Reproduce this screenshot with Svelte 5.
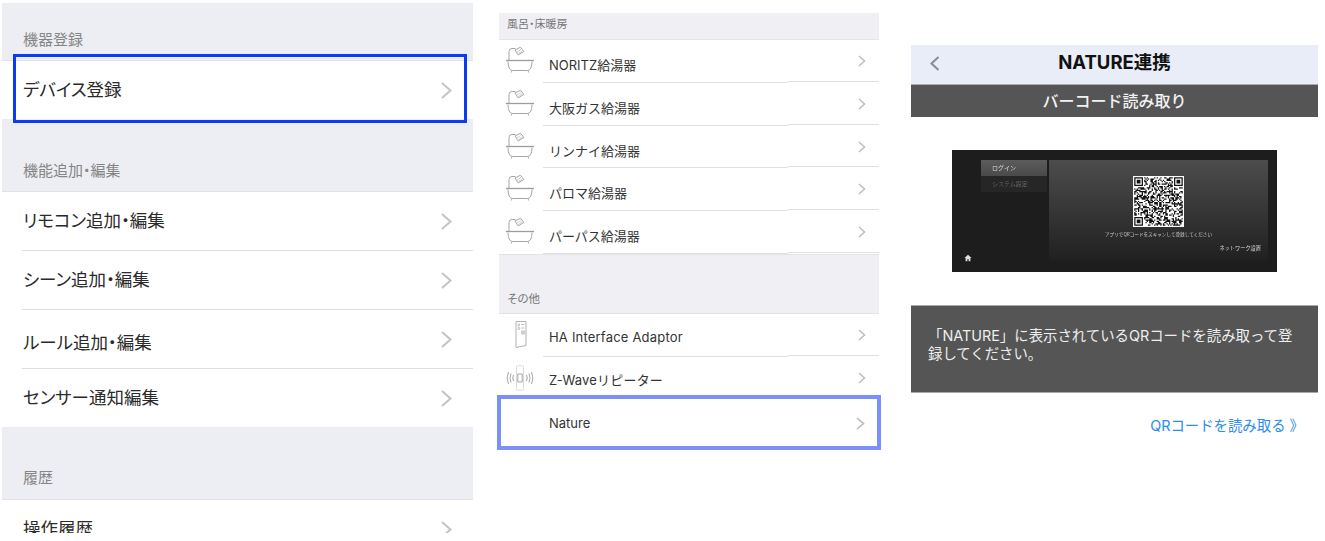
<script lang="ts">
	const settingSections = [
		{ title: '機器登録', cls: 'first', rows: [{ label: 'デバイス登録', hl: true }] },
		{
			title: '機能追加・編集',
			cls: '',
			rows: [
				{ label: 'リモコン追加・編集' },
				{ label: 'シーン追加・編集' },
				{ label: 'ルール追加・編集', low: true },
				{ label: 'センサー通知編集' }
			]
		},
		{ title: '履歴', cls: 'third', rows: [{ label: '操作履歴' }] }
	];

	const heaters = ['NORITZ給湯器', '大阪ガス給湯器', 'リンナイ給湯器', 'パロマ給湯器', 'パーパス給湯器'];

	// fake but stable QR modules
	const size = 39;
	function finder(x: number, y: number) {
		return `M${x} ${y}h7v7h-7zM${x + 1} ${y + 1}v5h5v-5zM${x + 2} ${y + 2}h3v3h-3z`;
	}
	let seed = 20231;
	let qrPath = finder(0, 0) + finder(size - 7, 0) + finder(0, size - 7);
	for (let y = 0; y < size; y++) {
		for (let x = 0; x < size; x++) {
			const inFinder = (x < 8 && y < 8) || (x >= size - 8 && y < 8) || (x < 8 && y >= size - 8);
			seed = (seed * 1103515245 + 12345) & 0x7fffffff;
			if (!inFinder && (seed >> 16) & 1) qrPath += `M${x} ${y}h1v1h-1z`;
		}
	}
	qrPath += `M${size - 9} ${size - 9}h9v9h-9z`;
</script>

<div class="page">
	<section class="panel settings">
		{#each settingSections as section}
			<div class="s-head {section.cls}">{section.title}</div>
			{#each section.rows as row, i}
				<div class="s-row" class:hl={row.hl} class:last={i === section.rows.length - 1}>
					<span class="s-label" class:low={row.low}>{row.label}</span>
					<svg class="chev-lg" viewBox="0 0 11 17" aria-hidden="true">
						<path d="M1 1l8.5 7.5L1 16" />
					</svg>
				</div>
			{/each}
		{/each}
	</section>

	<section class="panel devices">
		<div class="d-head top">風呂・床暖房</div>
		{#each heaters as name}
			<div class="d-row">
				<svg class="bath" viewBox="0 0 30 26" aria-hidden="true">
					<path d="M4 13V4.5Q4 1.5 7 1.5H10.5" />
					<path d="M10 3l5.5-2.8 3.4 4.3-5.7 3.4z" />
					<path d="M12 5l4-2.6M13.5 6.4l4-2.6" stroke-width="0.5" />
					<path d="M1 13.5H29" stroke-width="1.3" />
					<path d="M3 14.5Q3 23 7.5 23.5H22.5Q27 23 27 14.5" />
					<path d="M7 23.5l-.7 2M23 23.5l.7 2" />
				</svg>
				<span class="d-label">{name}</span>
				<svg class="chev-sm" viewBox="0 0 8 12" aria-hidden="true"><path d="M1 1l5.5 5L1 11" /></svg>
				<div class="sep"><i></i><i></i></div>
			</div>
		{/each}

		<div class="d-head tall">その他</div>
		<div class="d-row">
			<svg class="adaptor" viewBox="0 0 12 28" aria-hidden="true">
				<path d="M1 1.5H11V25.5L1 27.5z" />
				<path d="M3 4h1.5v2H3zM3 7.5h1.5v2H3z" stroke-width="0.6" />
				<path d="M6 4.5h3.5M6 8h3.5" stroke-width="0.7" />
				<path d="M6 10.5h4v4H6z" fill="#cfcfcf" stroke="none" />
			</svg>
			<span class="d-label hi">HA Interface Adaptor</span>
			<svg class="chev-sm" viewBox="0 0 8 12" aria-hidden="true"><path d="M1 1l5.5 5L1 11" /></svg>
			<div class="sep"><i></i><i></i></div>
		</div>
		<div class="d-row">
			<svg class="repeater" viewBox="0 0 28 26" aria-hidden="true">
				<path d="M10.5 1.5Q10.5.8 11.2.8H16.8Q17.5.8 17.5 1.5V24Q17.5 25.2 16.3 25.2H11.7Q10.5 25.2 10.5 24z" stroke="#d8d8d8" />
				<path d="M11.8 9H16.2V17H11.8z" />
				<path d="M7.5 10Q6 13 7.5 16M5 8.5Q3 13 5 17.5M2.5 7Q-.3 13 2.5 19" />
				<path d="M20.5 10Q22 13 20.5 16M23 8.5Q25 13 23 17.5M25.5 7Q28.3 13 25.5 19" />
			</svg>
			<span class="d-label hi">Z-Waveリピーター</span>
			<svg class="chev-sm" viewBox="0 0 8 12" aria-hidden="true"><path d="M1 1l5.5 5L1 11" /></svg>
		</div>
		<div class="d-row nature">
			<span class="d-label">Nature</span>
			<svg class="chev-md" viewBox="0 0 9 13" aria-hidden="true"><path d="M1 1l6.5 5.5L1 12" /></svg>
		</div>
	</section>

	<section class="panel nature-link">
		<header class="nav">
			<svg class="back" viewBox="0 0 10 15" aria-hidden="true"><path d="M8.5 1L1.5 7.5l7 6.5" /></svg>
			<h1>NATURE連携</h1>
		</header>
		<h2 class="sub">バーコード読み取り</h2>

		<div class="screen">
			<div class="screen-side">
				<div class="menu active">ログイン</div>
				<div class="menu">システム設定</div>
				<svg class="home" viewBox="0 0 10 10" aria-hidden="true">
					<path d="M5 .8L.5 5H2v4h2.2V6.5h1.6V9H8V5h1.5z" />
				</svg>
			</div>
			<div class="screen-main">
				<svg class="qr" viewBox="-1 -1 {size + 2} {size + 2}" aria-hidden="true">
					<rect x="-1" y="-1" width={size + 2} height={size + 2} fill="#fff" />
					<path d={qrPath} fill="#111" fill-rule="evenodd" />
				</svg>
				<p class="caption">アプリでQRコードをスキャンして登録してください</p>
				<p class="network">ネットワーク設置</p>
			</div>
		</div>

		<div class="info">「NATURE」に表示されているQRコードを読み取って登録してください。</div>
		<p class="link">QRコードを読み取る 》</p>
	</section>
</div>

<style>
	:global(body) {
		margin: 0;
		background: #fff;
		overflow: hidden;
	}

	.page {
		display: flex;
		align-items: flex-start;
		width: 1325px;
		height: 541px;
		overflow: hidden;
		font-family: Inter, "Noto Sans CJK JP", sans-serif;
		color: #2a2a2a;
	}

	.panel {
		flex: none;
	}

	/* left: settings list */
	.settings {
		width: 471px;
		height: 530px;
		margin: 3px 0 0 2px;
		overflow: hidden;
		background: #fff;
	}

	.s-head {
		box-sizing: border-box;
		height: 73px;
		padding-top: 41px;
		padding-left: 21px;
		background: #edeef3;
		border-bottom: 1px solid #e2e2e6;
		color: #858585;
		font-size: 15px;
		font-feature-settings: "palt";
		line-height: 21px;
	}

	.s-head.first {
		height: 58px;
		padding-top: 26px;
	}

	.s-head.third {
		padding-top: 40px;
	}

	.s-row {
		position: relative;
		display: flex;
		align-items: center;
		box-sizing: border-box;
		height: 59px;
		margin-left: 20px;
		padding: 0 21px 0 1px;
		border-bottom: 1px solid #dedee0;
		background: #fff;
	}

	.s-row.last {
		height: 58px;
		margin-left: 0;
		padding-left: 21px;
		border-bottom: none;
	}

	.s-row.hl::after {
		content: '';
		position: absolute;
		left: 11px;
		right: 6px;
		top: -7px;
		bottom: -4px;
		border: 3px solid #0b3cf3;
	}

	.s-label {
		font-size: 17.5px;
		font-feature-settings: "palt";
		line-height: 24px;
	}

	.s-label.low {
		padding-top: 8px;
	}

	.chev-lg {
		width: 11px;
		height: 17px;
		margin-left: auto;
		fill: none;
		stroke: #c3c3c6;
		stroke-width: 2;
	}

	/* middle: device list */
	.devices {
		width: 380px;
		margin: 13px 0 0 26px;
		background: #fff;
	}

	.d-head {
		box-sizing: border-box;
		padding-left: 8px;
		background: #efeff4;
		border-bottom: 1px solid #e4e4e7;
		color: #777;
		font-size: 11px;
		font-feature-settings: "palt";
	}

	.d-head.top {
		height: 27px;
		line-height: 22px;
	}

	.d-head.tall {
		height: 60px;
		padding-top: 35px;
		line-height: 18px;
		font-size: 11.5px;
		border-top: 1px solid #e4e4e7;
	}

	.d-row {
		position: relative;
		display: flex;
		align-items: flex-start;
		box-sizing: border-box;
		height: 42.75px;
		padding-right: 13px;
	}

	.d-label {
		position: absolute;
		left: 50px;
		top: 16px;
		font-size: 13px;
		line-height: 18px;
		color: #333;
	}

	.d-label.hi {
		top: 14.5px;
		letter-spacing: 0.2px;
	}

	.sep {
		position: absolute;
		left: 44px;
		right: 0;
		bottom: 0;
		display: flex;
		align-items: flex-end;
	}

	.sep i {
		display: block;
		height: 1px;
		background: #e0e0e2;
	}

	.sep i:first-child {
		width: 245px;
	}

	.sep i:last-child {
		flex: 1;
		margin-bottom: 1px;
	}

	.bath {
		width: 30px;
		height: 26px;
		margin: 7px 0 0 6px;
		fill: none;
		stroke: #9c9c9c;
		stroke-width: 0.9;
	}

	.adaptor {
		width: 12px;
		height: 28px;
		margin: 6px 0 0 16px;
		fill: none;
		stroke: #a8a8a8;
		stroke-width: 0.9;
	}

	.repeater {
		width: 28px;
		height: 26px;
		margin: 8px 0 0 7px;
		fill: none;
		stroke: #9c9c9c;
		stroke-width: 0.9;
	}

	.chev-sm {
		width: 8px;
		height: 12px;
		margin: 15px 0 0 auto;
		fill: none;
		stroke: #bdbdc0;
		stroke-width: 1.5;
	}

	.d-row.nature {
		height: 53px;
		padding-right: 14px;
		margin-top: -2px;
	}

	.d-row.nature .d-label {
		top: 17px;
	}

	.d-row.nature::after {
		content: '';
		position: absolute;
		left: -2px;
		right: -2px;
		top: -2px;
		bottom: 0;
		border: 4px solid #7c90fb;
	}

	.chev-md {
		width: 9px;
		height: 13px;
		margin: 20px 0 0 auto;
		fill: none;
		stroke: #b8b8bb;
		stroke-width: 1.6;
	}

	/* right: nature link */
	.nature-link {
		width: 407px;
		margin: 45px 0 0 32px;
	}

	.nav {
		position: relative;
		display: flex;
		align-items: center;
		justify-content: center;
		height: 40px;
		background: #e8edf8;
		border-bottom: 1px solid #a9abb0;
		box-sizing: border-box;
	}

	.nav h1 {
		margin: 0 0 6px;
		font-size: 18.5px;
		font-weight: 700;
		line-height: 24px;
		color: #111;
	}

	.back {
		position: absolute;
		left: 19px;
		top: 11px;
		width: 10px;
		height: 15px;
		fill: none;
		stroke: #8b8b90;
		stroke-width: 2;
	}

	.sub {
		box-sizing: border-box;
		height: 32px;
		margin: 0;
		background: #555;
		color: #f2f2f2;
		font-size: 16px;
		font-weight: 500;
		line-height: 33px;
		text-align: center;
	}

	.screen {
		display: flex;
		box-sizing: border-box;
		width: 325px;
		height: 122px;
		margin: 33px 0 0 41px;
		padding: 10px 9px 11px 29px;
		gap: 2px;
		background: #1d1d1d;
		filter: blur(0.5px);
		font-family: "Noto Sans CJK JP", sans-serif;
	}

	.screen-side {
		position: relative;
		width: 66px;
		flex: none;
	}

	.menu {
		box-sizing: border-box;
		height: 16px;
		padding-left: 11px;
		background: #262626;
		color: #666;
		font-size: 6px;
		line-height: 15px;
	}

	.menu.active {
		background: linear-gradient(#5c5c5c, #4a4a4a);
		color: #ddd;
	}

	.home {
		position: absolute;
		left: -17px;
		bottom: -1px;
		width: 8px;
		height: 8px;
		fill: #ddd;
	}

	.screen-main {
		position: relative;
		flex: 1;
		display: flex;
		flex-direction: column;
		align-items: center;
		padding-top: 16px;
		background: linear-gradient(#4c4c4c, #202020);
	}

	.qr {
		width: 51px;
		height: 51px;
		flex: none;
	}

	.caption {
		margin: 4px 0 0;
		color: #ccc;
		font-size: 4.6px;
		line-height: 6px;
	}

	.network {
		position: absolute;
		right: 7px;
		bottom: 10px;
		margin: 0;
		color: #ddd;
		font-size: 5.2px;
		line-height: 7px;
	}

	.info {
		box-sizing: border-box;
		height: 88px;
		margin-top: 33px;
		padding: 21px 22px 0 17px;
		background: #555;
		border: 1px solid #a8a8a8;
		border-width: 1px 0;
		color: #eee;
		font-size: 14.4px;
		line-height: 18px;
	}

	.link {
		margin: 23px 14px 0 0;
		color: #2d8cf0;
		font-size: 14.4px;
		line-height: 20px;
		text-align: right;
	}
</style>
